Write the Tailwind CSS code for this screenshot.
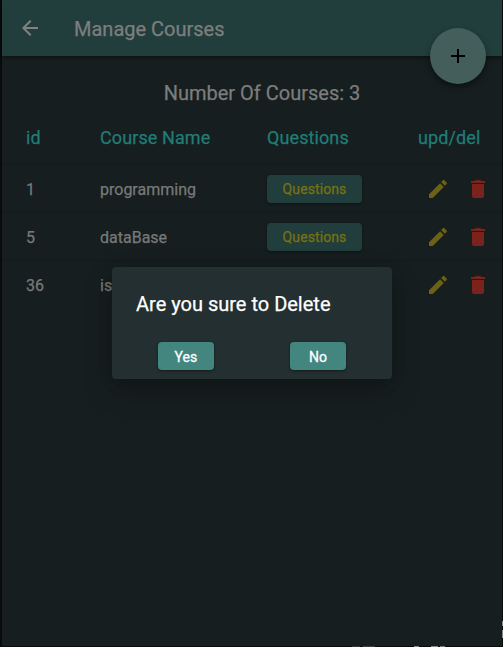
<!DOCTYPE html>
<html lang="en">
<head>
<meta charset="utf-8">
<title>Manage Courses</title>
<script src="https://cdn.jsdelivr.net/npm/@tailwindcss/browser@4"></script>
</head>
<body class="h-[647px] w-[503px] overflow-hidden bg-[#080a0b] font-['Roboto',sans-serif] [-webkit-text-stroke:0.25px]">
<svg class="hidden">
  <symbol id="edit" viewBox="0 0 24 24"><path d="M3 17.25V21h3.75L17.81 9.94l-3.75-3.75L3 17.25zM20.71 7.04c.39-.39.39-1.02 0-1.41l-2.34-2.34c-.39-.39-1.02-.39-1.41 0l-1.83 1.83 3.75 3.75 1.83-1.83z"/></symbol>
  <symbol id="delete" viewBox="0 0 24 24"><path d="M6 19c0 1.1.9 2 2 2h8c1.1 0 2-.9 2-2V7H6v12zM19 4h-3.5l-1-1h-5l-1 1H5v2h14V4z"/></symbol>
</svg>
<div class="relative ml-0.5 h-[646px] w-[500px] bg-[#161e1f]">
  <header class="relative flex h-14 items-center bg-[#213e3c] pl-4 shadow-[0_2px_4px_rgba(0,0,0,0.4)]">
    <svg class="size-6 fill-[#7f8281]" viewBox="0 0 24 24"><path d="M20 11H7.83l5.59-5.59L12 4l-8 8 8 8 1.41-1.41L7.83 13H20v-2z"/></svg>
    <h1 class="ml-8 pt-0.5 text-[20px] font-normal leading-6 text-[#7d7e7e]">Manage Courses</h1>
  </header>
  <main>
    <h2 class="flex h-[53px] items-center justify-center pl-5 pt-[21px] text-[20px] font-normal leading-8 text-[#7c7d7d]">Number Of Courses: 3</h2>
    <div class="grid h-14 grid-cols-[74px_167px_151px_1fr] items-center border-b border-[#131b1b] pl-6 pt-0.5 text-[18px] font-normal tracking-[0.1px] text-[#207d77]">
      <span>id</span><span>Course Name</span><span>Questions</span><span>upd/del</span>
    </div>
    <div class="grid h-12 grid-cols-[74px_167px_157px_1fr] items-center border-b border-[#131b1b] pl-6 text-[16px] font-normal text-[#777a79]">
      <span class="pt-0.5">1</span><span class="pt-0.5">programming</span>
      <span class="flex h-7 w-[95px] items-center justify-center rounded-[4px] bg-[#213e3c] pt-0.5 text-[14px] tracking-[0.1px] text-[#7a7212] shadow-[0_1px_3px_rgba(0,0,0,0.35)]">Questions</span>
      <span class="flex gap-4 pl-[2px]"><svg class="size-6 fill-[#6c6214]"><use href="#edit"/></svg><svg class="size-6 fill-[#7a231d]"><use href="#delete"/></svg></span>
    </div>
    <div class="grid h-12 grid-cols-[74px_167px_157px_1fr] items-center border-b border-[#131b1b] pl-6 text-[16px] font-normal text-[#777a79]">
      <span class="pt-0.5">5</span><span class="pt-0.5">dataBase</span>
      <span class="flex h-7 w-[95px] items-center justify-center rounded-[4px] bg-[#213e3c] pt-0.5 text-[14px] tracking-[0.1px] text-[#7a7212] shadow-[0_1px_3px_rgba(0,0,0,0.35)]">Questions</span>
      <span class="flex gap-4 pl-[2px]"><svg class="size-6 fill-[#6c6214]"><use href="#edit"/></svg><svg class="size-6 fill-[#7a231d]"><use href="#delete"/></svg></span>
    </div>
    <div class="grid h-12 grid-cols-[74px_167px_157px_1fr] items-center pl-6 text-[16px] font-normal text-[#777a79]">
      <span class="pt-0.5">36</span><span class="pt-0.5">is</span><span></span>
      <span class="flex gap-4 pl-[2px]"><svg class="size-6 fill-[#6c6214]"><use href="#edit"/></svg><svg class="size-6 fill-[#7a231d]"><use href="#delete"/></svg></span>
    </div>
  </main>
  <button class="absolute left-[428px] top-7 flex size-14 items-center justify-center rounded-full bg-[#435e5b] shadow-[0_3px_6px_rgba(0,0,0,0.45)]">
    <svg class="size-6 fill-black" viewBox="0 0 24 24"><path d="M19 13h-6v6h-2v-6H5v-2h6V5h2v6h6v2z"/></svg>
  </button>
  <section class="absolute left-[110px] top-[267px] flex h-[112px] w-[280px] flex-col rounded-[4px] bg-[#232f30] shadow-[0_11px_30px_rgba(0,0,0,0.2),0_4px_14px_rgba(0,0,0,0.15)]">
    <h3 class="pl-6 pt-[25px] text-[20px] font-normal leading-6 text-white">Are you sure to Delete</h3>
    <div class="mt-[26.4px] flex justify-between pl-[46px] pr-[46px]">
      <button class="flex h-7 w-14 items-center justify-center rounded-[4px] bg-[#438680] pt-px text-[14px] font-normal leading-5 tracking-[0.1px] text-white shadow-[0_1px_3px_rgba(0,0,0,0.4)] [-webkit-text-stroke:0.3px]">Yes</button>
      <button class="flex h-7 w-14 items-center justify-center rounded-[4px] bg-[#438680] pt-px text-[14px] font-normal leading-5 tracking-[0.1px] text-white shadow-[0_1px_3px_rgba(0,0,0,0.4)] [-webkit-text-stroke:0.3px]">No</button>
    </div>
  </section>
  <div class="absolute -bottom-px left-0 h-px w-full">
    <i class="absolute left-[350px] h-px w-2 bg-[#303838]"></i><i class="absolute left-[361px] h-px w-3 bg-[#3b4242]"></i><i class="absolute left-[412px] h-px w-[5px] bg-[#858989]"></i><i class="absolute left-[429px] h-px w-[7px] bg-[#858989]"></i><i class="absolute left-[438px] h-px w-[5px] bg-[#777b7b]"></i>
  </div>
  <i class="absolute left-[500px] top-[621px] h-[5px] w-px bg-[#858989]"></i><i class="absolute left-[500px] top-[630px] h-2 w-px bg-[#858989]"></i>
</div>
</body>
</html>
